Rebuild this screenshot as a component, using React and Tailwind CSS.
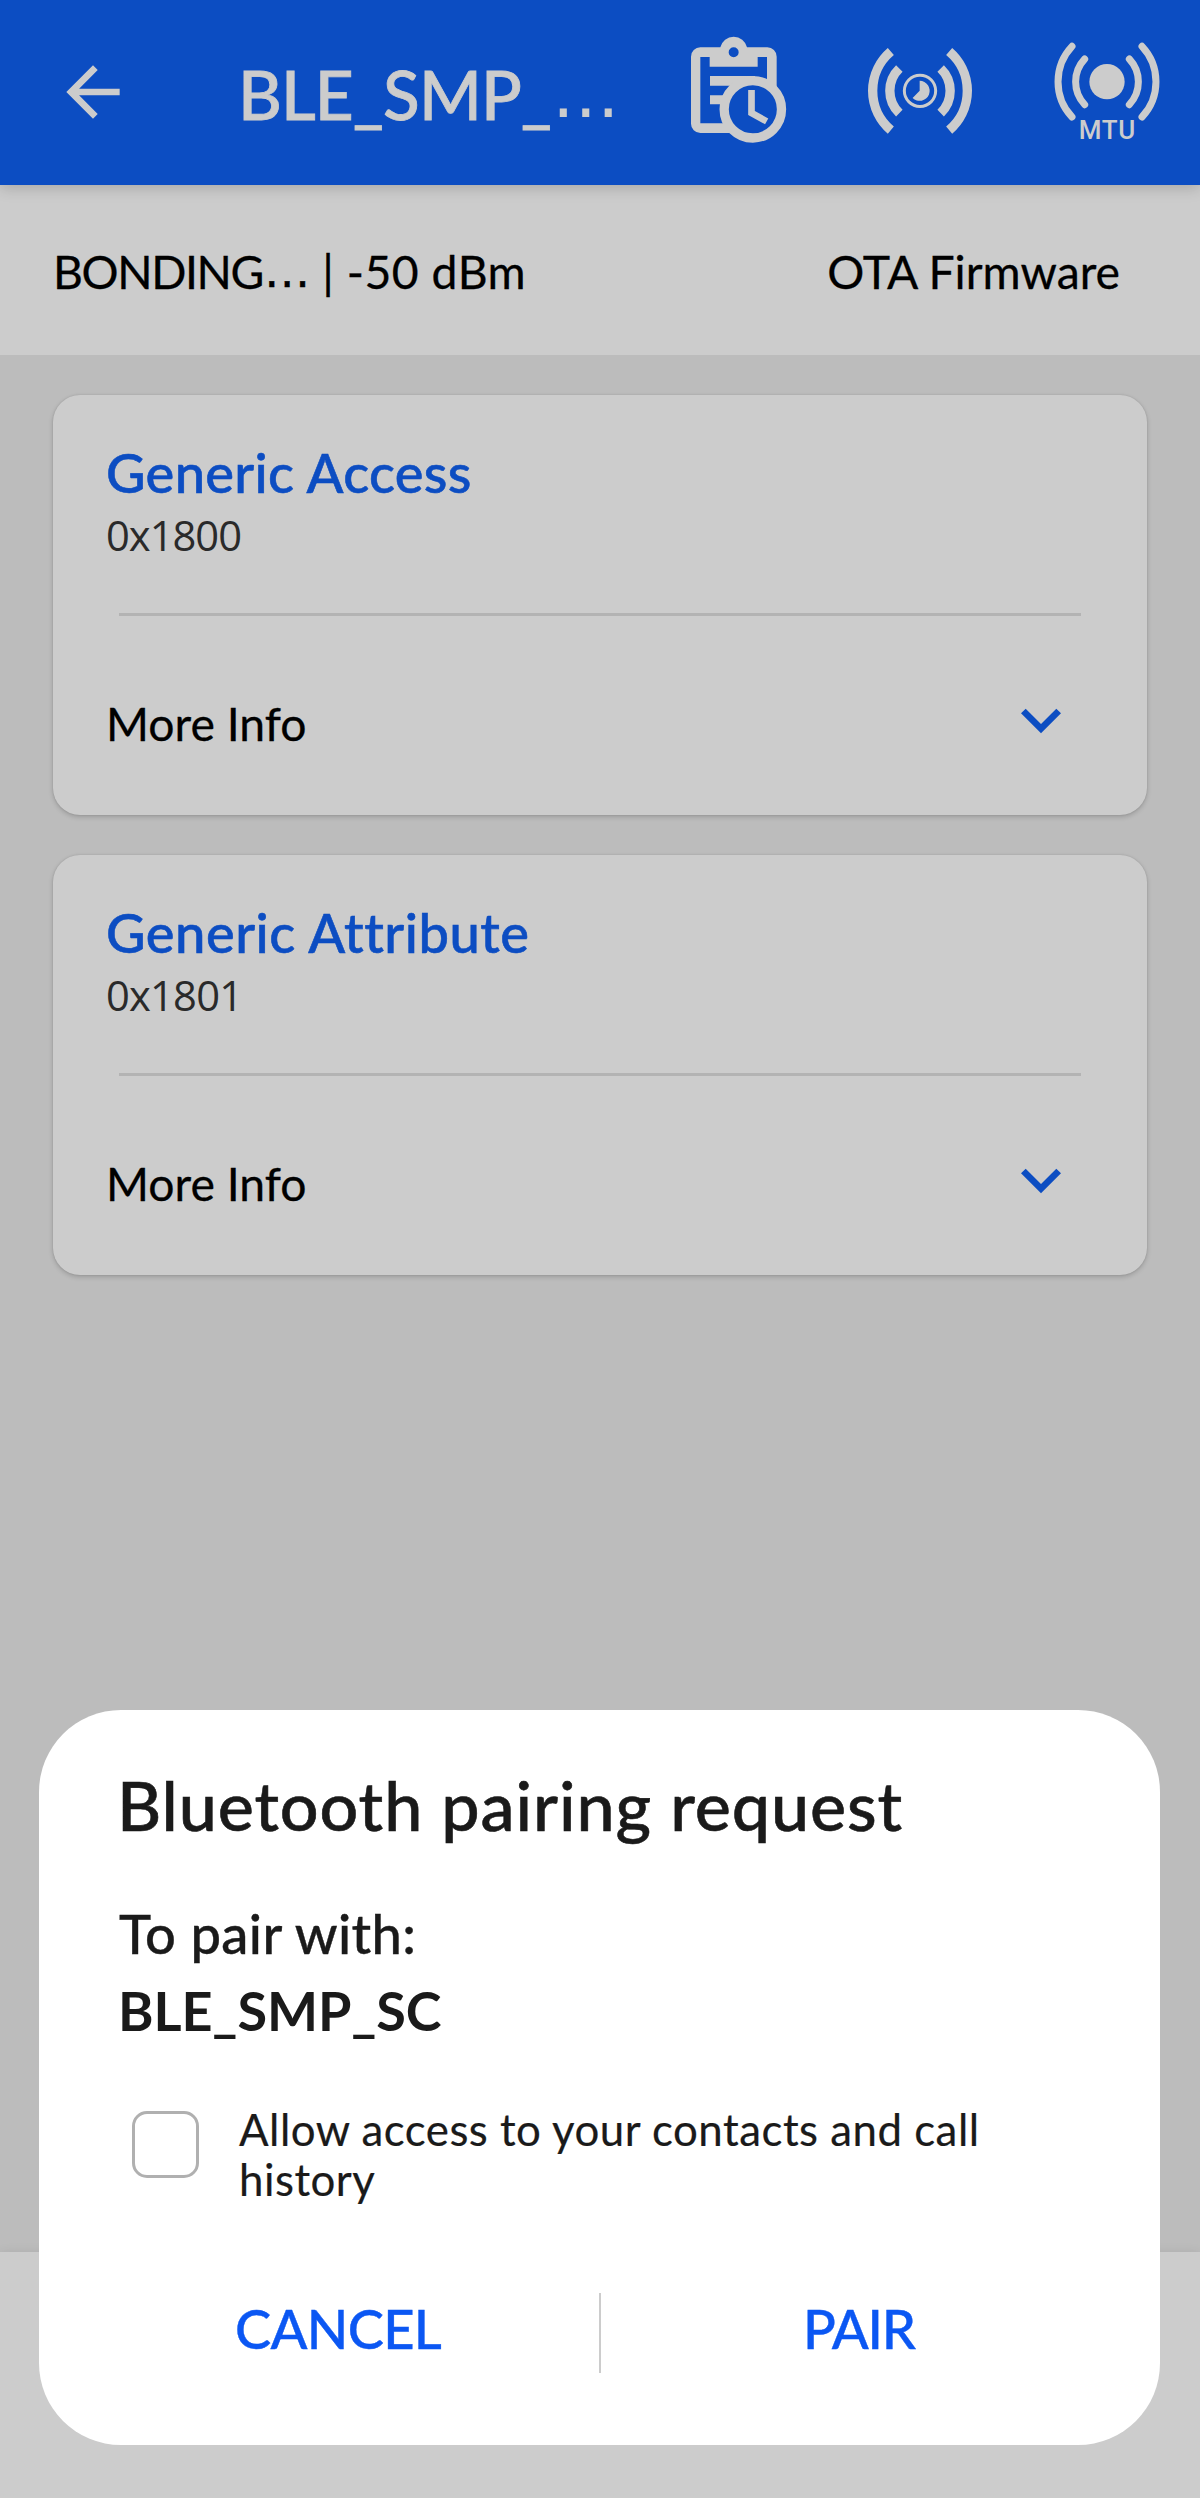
import React from "react";

function BackIcon() {
  return (
    <svg className="mt-[52px] ml-[53px] size-20 shrink-0" viewBox="0 0 24 24" fill="#cccccc">
      <path d="M20 11H7.83l5.59-5.59L12 4l-8 8 8 8 1.41-1.41L7.83 13H20z" />
    </svg>
  );
}

function ClipboardClockIcon() {
  return (
    <svg className="mt-[30px] h-[120px] w-[110px] shrink-0" viewBox="72 90 330 360" fill="none" stroke="#cccccc">
      <path
        fill="#cccccc"
        stroke="none"
        fillRule="evenodd"
        d="M121 142H181A41 41 0 0 1 261 142H322A28 28 0 0 1 350 170V262L321 246V171H293V200H149V171H121V370H195L212 399H121A28 28 0 0 1 93 371V170A28 28 0 0 1 121 142ZM221 141.500A15 15 0 1 0 221 171.500A15 15 0 1 0 221 141.500Z"
      />
      <path fill="#cccccc" stroke="none" d="M150 228H285V257H150ZM150 286H195V313H150Z" />
      <circle cx="278.500" cy="328" r="86" strokeWidth="28" fill="#0c4dc2" />
      <path d="M274.500 270V339L320 364" strokeWidth="20" />
    </svg>
  );
}

function SignalTimerIcon() {
  return (
    <svg className="mt-[42px] h-[98px] w-[110px] shrink-0" viewBox="616 126 330 294" fill="none" stroke="#cccccc" strokeWidth="28">
      <path d="M693.500 154.500A155 155 0 0 0 693.500 390.500" />
      <path d="M719 205.500A93 93 0 0 0 719 339.500" />
      <path d="M868.500 154.500A155 155 0 0 1 868.500 390.500" />
      <path d="M843 205.500A93 93 0 0 1 843 339.500" />
      <circle cx="781" cy="272.500" r="47" strokeWidth="9" />
      <path d="M780 272.500V242.500A30 30 0 1 1 758.800 293.700Z" fill="#cccccc" stroke="none" />
    </svg>
  );
}

function MtuIcon() {
  return (
    <svg className="mt-[38px] h-[120px] w-[110px] shrink-0" viewBox="365 114 330 360" fill="none" stroke="#cccccc" strokeWidth="21" strokeLinecap="round">
      <path d="M425 139A155 155 0 0 0 425 351" />
      <path d="M463 177A100 100 0 0 0 463 314" />
      <path d="M635 139A155 155 0 0 1 635 351" />
      <path d="M597 177A100 100 0 0 1 597 314" />
      <circle cx="530" cy="245" r="53" fill="#cccccc" stroke="none" />
      <text x="530" y="416" textAnchor="middle" fill="#cccccc" stroke="none" textLength="170" className="font-['Roboto'] text-[78px] font-medium">
        MTU
      </text>
    </svg>
  );
}

function ServiceCard({ name, uuid, nameClass, uuidClass }) {
  return (
    <section className="h-[420px] rounded-[27px] bg-[#cccccc] pt-[45px] shadow-[0_2px_5px_rgba(0,0,0,0.18),0_0_2px_rgba(0,0,0,0.12)]">
      <h2 className={`ml-[53px] h-16 text-[54.3px] leading-[64px] font-medium whitespace-nowrap text-[#0c4dc2] [-webkit-text-stroke:0.6px_#0c4dc2] ${nameClass}`}>{name}</h2>
      <p className={`mt-[6px] ml-[53px] h-[50px] font-['Open_Sans'] text-[41.7px] leading-[50px] text-[#2a2a2a] ${uuidClass}`}>{uuid}</p>
      <div className="mt-[53px] mr-[66px] ml-[66px] h-[3px] bg-[#b3b3b3]" />
      <div className="mt-[64px] flex justify-between pr-[66px] pl-[53px]">
        <span className="mt-[15px] text-[46.3px] leading-[56px] text-black [-webkit-text-stroke:0.3px_black]">More Info</span>
        <svg className="size-20" viewBox="0 0 24 24" fill="#0c4dc2">
          <path d="M16.590 8.590 12 13.170 7.410 8.590 6 10l6 6 6-6z" />
        </svg>
      </div>
    </section>
  );
}

export default function App() {
  return (
    <div className="relative flex h-[2498px] w-[1200px] flex-col overflow-hidden bg-[#bcbcbc] font-['Lato',sans-serif]">
      <header className="relative z-10 flex h-[185px] shrink-0 items-start bg-[#0c4dc2] shadow-[0_3px_14px_rgba(0,0,0,0.18)]">
        <BackIcon />
        <h1 className="mt-[54px] ml-[105px] flex w-[446px] text-[67.5px] leading-[80px] font-medium whitespace-nowrap text-[#cccccc]">
          <span className="w-[314px] tracking-[-0.9px] [-webkit-text-stroke:0.8px_#cccccc]">BLE_SMP_</span>
          <span className="font-['DejaVu_Sans']">…</span>
        </h1>
        <ClipboardClockIcon />
        <div className="ml-[71px] flex">
          <SignalTimerIcon />
        </div>
        <div className="ml-[77px] flex">
          <MtuIcon />
        </div>
      </header>

      <div className="flex h-[170px] shrink-0 items-start justify-between bg-[#cccccc] pt-[58px] pr-[80px] pl-[53px] text-[46.3px] leading-[56px] whitespace-nowrap text-black [-webkit-text-stroke:0.3px_black]">
        <div className="flex whitespace-pre">
          <span className="w-[211px] tracking-[-1.4px]">BONDING</span>
          <span className="w-[46px] font-['DejaVu_Sans']">…</span>
          <span className="tracking-[0.5px]"> | -50 dBm</span>
        </div>
        <span>OTA Firmware</span>
      </div>

      <main className="flex flex-1 flex-col gap-10 px-[53px] pt-10">
        <ServiceCard name="Generic Access" uuid="0x1800" nameClass="tracking-[0.3px]" uuidClass="tracking-[-1px]" />
        <ServiceCard name="Generic Attribute" uuid="0x1801" nameClass="tracking-[0.5px]" uuidClass="tracking-[-0.8px]" />
      </main>

      <footer className="h-[246px] shrink-0 bg-[#cccccc] shadow-[0_0_10px_rgba(0,0,0,0.08)]" />

      <div role="dialog" className="absolute top-[1710px] left-[39px] h-[735px] w-[1121px] rounded-[82px] bg-white pt-[55px] text-[#1a1a1a]">
        <h2 className="ml-[78px] text-[68.2px] leading-[80px] font-medium tracking-[0.9px] whitespace-nowrap [-webkit-text-stroke:0.6px_#1a1a1a]">Bluetooth pairing request</h2>
        <p className="mt-[49px] ml-[80px] text-[54.3px] leading-[78px] font-medium tracking-[0.4px] [-webkit-text-stroke:0.4px_#1a1a1a]">To pair with:</p>
        <p className="ml-[79px] text-[54px] leading-[78px] font-bold tracking-[-0.1px]">BLE_SMP_SC</p>
        <div className="mt-[54px] flex h-[100px] items-start">
          <div className="mt-[7px] ml-[93px] size-[67px] shrink-0 rounded-[15px] border-[3.4px] border-[#b0b0b0]" />
          <p className="ml-[40px] w-[780px] text-[43.8px] leading-[50px] tracking-[0.5px] [-webkit-text-stroke:0.2px_#1a1a1a]">
            Allow access to your contacts and call
            <br />
            history
          </p>
        </div>
        <div className="mt-[89px] flex h-20 items-start text-[54.3px] leading-[70px] font-medium text-[#0b57f3] [-webkit-text-stroke:0.4px_#0b57f3]">
          <button className="w-[560px] pl-[196px] text-left tracking-[-0.7px]">CANCEL</button>
          <div className="h-20 w-[2px] bg-[#cccccc]" />
          <button className="flex-1 pl-[202px] text-left tracking-[-1.3px]">PAIR</button>
        </div>
      </div>
    </div>
  );
}
